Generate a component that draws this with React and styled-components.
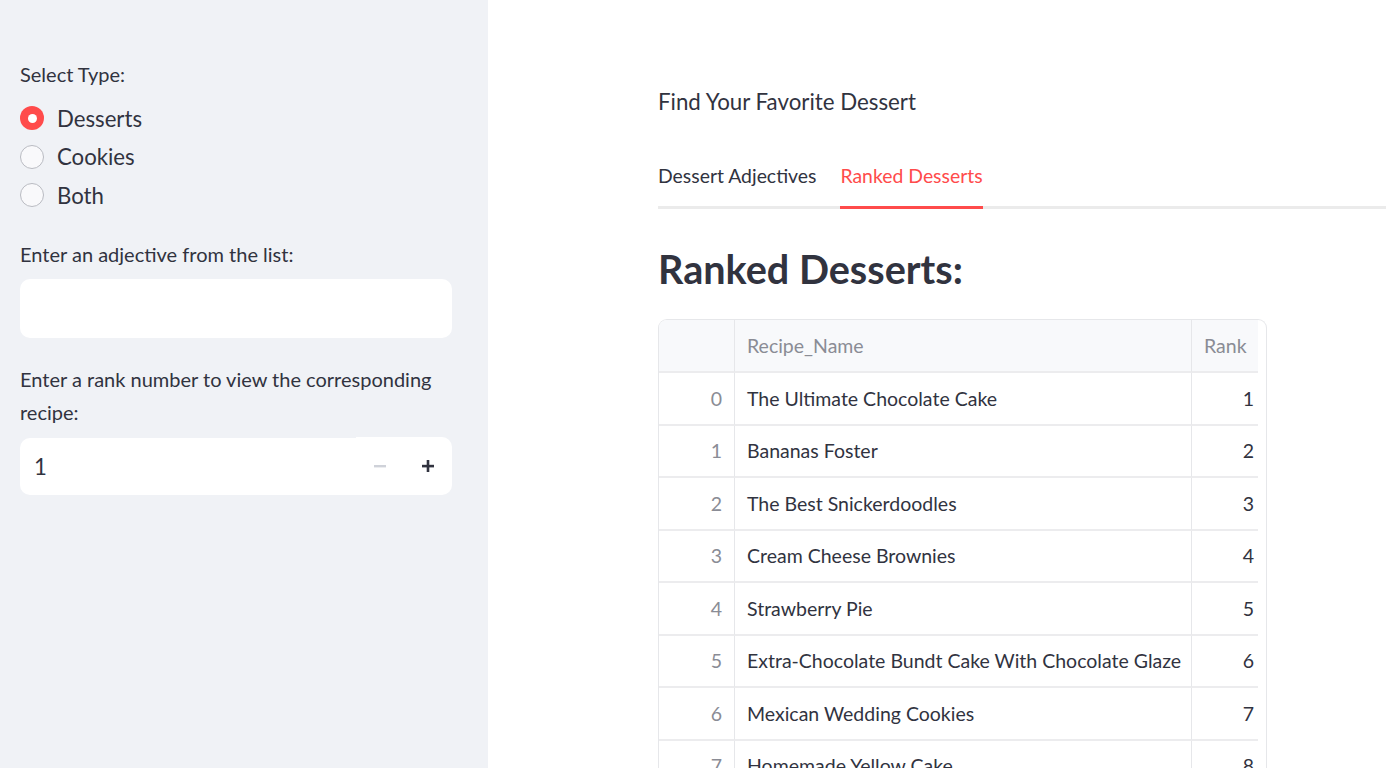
import React from "react";
import styled, { createGlobalStyle } from "styled-components";

const Global = createGlobalStyle`
  html, body { margin: 0; padding: 0; }
  body {
    font-family: Lato, "Noto Sans", sans-serif;
    color: #31333f;
    background: #ffffff;
    -webkit-font-smoothing: antialiased;
  }
  * { box-sizing: border-box; }
`;

const Page = styled.div`
  display: flex;
  width: 1386px;
  height: 768px;
  overflow: hidden;
`;

const Sidebar = styled.aside`
  width: 488px;
  flex: none;
  background: #f0f2f6;
  padding: 60px 36px 0 20px;
  display: flex;
  flex-direction: column;
`;

const Label = styled.div`
  font-size: 20px;
  line-height: ${(p) => p.$lh || 28}px;
  color: #31333f;
  margin-bottom: ${(p) => p.$mb || 8}px;
`;

const RadioGroup = styled.div`
  display: flex;
  flex-direction: column;
  margin-bottom: 25px;
`;

const RadioRow = styled.label`
  display: flex;
  align-items: center;
  gap: 13px;
  height: 38.5px;
  font-size: 22.2px;
  color: #31333f;
`;

const RadioCircle = styled.span`
  width: 24px;
  height: 24px;
  border-radius: 50%;
  flex: none;
  display: flex;
  align-items: center;
  justify-content: center;
  background: ${(p) => (p.$checked ? "#ff4b4b" : "#f9f9fb")};
  border: ${(p) => (p.$checked ? "none" : "1.5px solid #b9bbc2")};
  &::after {
    content: "";
    display: ${(p) => (p.$checked ? "block" : "none")};
    width: 9px;
    height: 9px;
    border-radius: 50%;
    background: #ffffff;
  }
`;

const TextBox = styled.div`
  height: 59px;
  background: #ffffff;
  border-radius: 10px;
  margin-bottom: 25px;
`;

const NumberBox = styled.div`
  height: 58px;
  display: flex;
  align-items: stretch;
`;

const NumberField = styled.div`
  flex: 1;
  margin-top: 1px;
  background: #ffffff;
  border-radius: 10px 0 0 10px;
  display: flex;
  align-items: center;
  padding-left: 14px;
  font-size: 22.2px;
  color: #31333f;
`;

const Steppers = styled.div`
  display: flex;
  background: #ffffff;
  border-radius: 0 10px 10px 0;
`;

const StepButton = styled.span`
  width: 48px;
  display: flex;
  align-items: center;
  justify-content: center;
  color: ${(p) => (p.$disabled ? "#cfd2d9" : "#31333f")};
`;

const Main = styled.main`
  flex: 1;
  padding: 86px 0 0 170px;
  display: flex;
  flex-direction: column;
`;

const Subtitle = styled.div`
  font-size: 22.3px;
  line-height: 32px;
  color: #31333f;
  margin-bottom: 42px;
`;

const TabBar = styled.div`
  display: flex;
  gap: 24px;
  border-bottom: 3px solid #ebebeb;
`;

const Tab = styled.div`
  font-size: 19.4px;
  line-height: 32px;
  padding-bottom: 14px;
  margin-bottom: -3px;
  color: ${(p) => (p.$active ? "#ff4b4b" : "#31333f")};
  border-bottom: 3px solid ${(p) => (p.$active ? "#ff4b4b" : "transparent")};
`;

const Heading = styled.h2`
  margin: 32px 0 0;
  font-size: 39.6px;
  line-height: 56px;
  font-weight: 700;
  color: #31333f;
`;

const TableWrap = styled.div`
  margin-top: 22px;
  width: 609px;
  border: 1px solid #e6e7ea;
  border-bottom: none;
  border-radius: 9px 9px 0 0;
  padding-right: 8px;
  overflow: hidden;
`;

const Grid = styled.div`
  display: grid;
  grid-template-columns: 76px 457px 66px;
`;

const Cell = styled.div`
  height: ${(p) => (p.$head ? 53 : 52.5)}px;
  display: flex;
  align-items: center;
  justify-content: ${(p) => (p.$right ? "flex-end" : "flex-start")};
  padding: 0 ${(p) => (p.$last ? 4 : 12)}px 0 12px;
  font-size: 19.5px;
  white-space: nowrap;
  color: ${(p) => (p.$muted ? "#8a8c95" : "#31333f")};
  background: ${(p) => (p.$head ? "#f8f9fb" : "#ffffff")};
  border-right: ${(p) => (p.$last ? "none" : "1px solid #e6e7ea")};
  border-bottom: 2px solid #ececee;
`;

const rows = [
  "The Ultimate Chocolate Cake",
  "Bananas Foster",
  "The Best Snickerdoodles",
  "Cream Cheese Brownies",
  "Strawberry Pie",
  "Extra-Chocolate Bundt Cake With Chocolate Glaze",
  "Mexican Wedding Cookies",
  "Homemade Yellow Cake",
];

const Minus = () => (
  <svg width="14" height="14" viewBox="0 0 14 14">
    <rect x="1" y="6" width="12" height="2.4" fill="currentColor" />
  </svg>
);
const Plus = () => (
  <svg width="14" height="14" viewBox="0 0 14 14">
    <rect x="1" y="5.8" width="12" height="2.6" fill="currentColor" />
    <rect x="5.7" y="1" width="2.6" height="12" fill="currentColor" />
  </svg>
);

export default function App() {
  return (
    <>
      <Global />
      <Page>
        <Sidebar>
          <Label $mb={11}>Select Type:</Label>
          <RadioGroup>
            <RadioRow><RadioCircle $checked />Desserts</RadioRow>
            <RadioRow><RadioCircle />Cookies</RadioRow>
            <RadioRow><RadioCircle />Both</RadioRow>
          </RadioGroup>
          <Label $mb={11}>Enter an adjective from the list:</Label>
          <TextBox />
          <Label $mb={8} $lh={33}>
            Enter a rank number to view the corresponding recipe:
          </Label>
          <NumberBox>
            <NumberField>1</NumberField>
            <Steppers>
              <StepButton $disabled><Minus /></StepButton>
              <StepButton><Plus /></StepButton>
            </Steppers>
          </NumberBox>
        </Sidebar>
        <Main>
          <Subtitle>Find Your Favorite Dessert</Subtitle>
          <TabBar>
            <Tab>Dessert Adjectives</Tab>
            <Tab $active>Ranked Desserts</Tab>
          </TabBar>
          <Heading>Ranked Desserts:</Heading>
          <TableWrap>
            <Grid>
              <Cell $head />
              <Cell $head $muted>Recipe_Name</Cell>
              <Cell $head $muted $last>Rank</Cell>
              {rows.map((r, i) => (
                <React.Fragment key={r}>
                  <Cell $muted $right>{i}</Cell>
                  <Cell>{r}</Cell>
                  <Cell $right $last>{i + 1}</Cell>
                </React.Fragment>
              ))}
            </Grid>
          </TableWrap>
        </Main>
      </Page>
    </>
  );
}
